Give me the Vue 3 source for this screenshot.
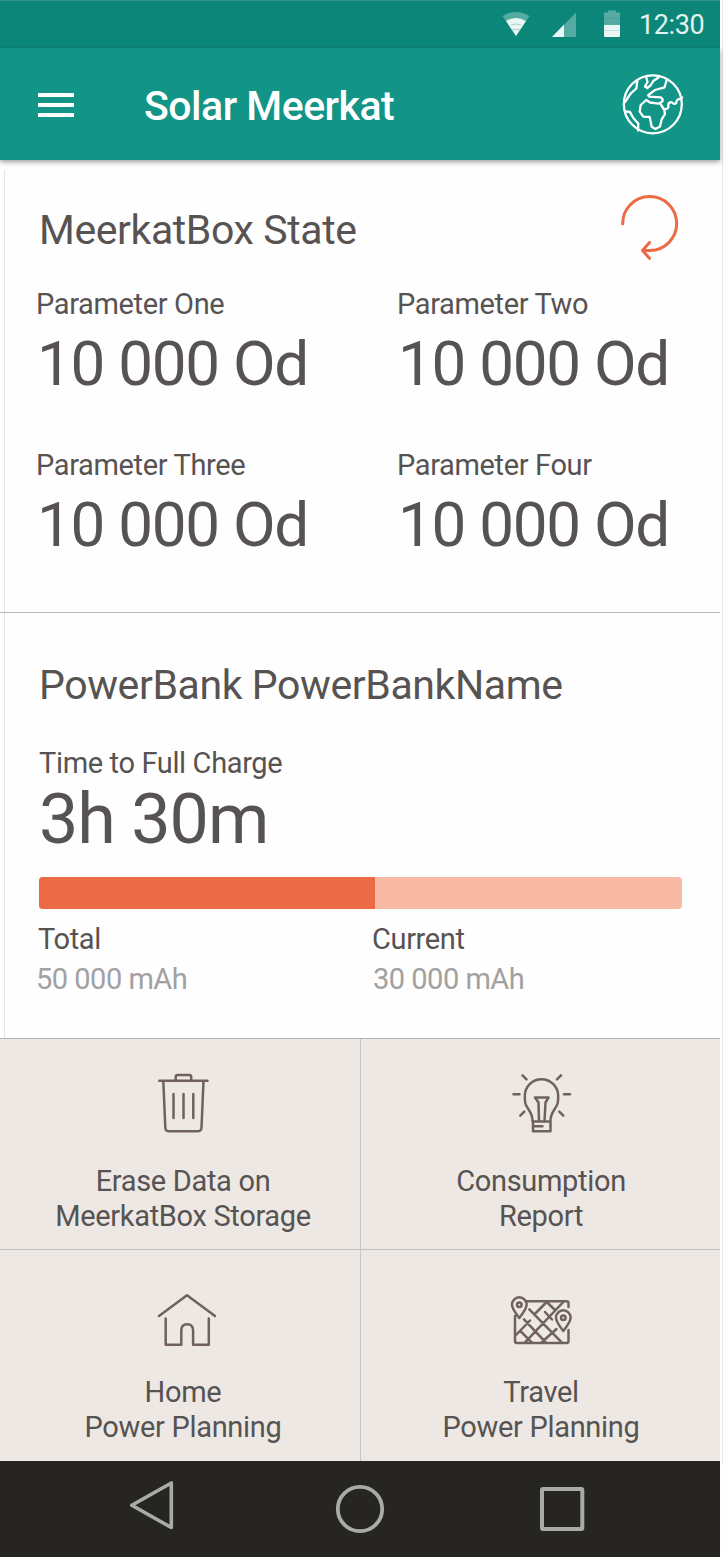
<script setup>
const params = [
  { label: 'Parameter One', value: '10 000 Od' },
  { label: 'Parameter Two', value: '10 000 Od' },
  { label: 'Parameter Three', value: '10 000 Od' },
  { label: 'Parameter Four', value: '10 000 Od' },
]
const charge = 52.3
</script>

<template>
  <div class="screen">
    <div class="status">
      <svg class="status-icons" width="124" height="36" viewBox="500 6 124 36">
        <path d="M502.500 16Q516 8 529.500 16L516 36Z" fill="#55aba1" />
        <path d="M506 21Q516 15 526 21L516 36Z" fill="#eaf6f4" />
        <path d="M511 25q5-2 10 0M512 30q4-1.500 8 0" fill="none" stroke="#9fd2cb" stroke-width="1" />
        <path d="M552 37L576 12.500V37Z" fill="#55aba1" />
        <path d="M552 37L564 24.500V37Z" fill="#eaf6f4" />
        <path d="M608 10.500h8v2h4V25h-16V12.500h4z" fill="#55aba1" />
        <path d="M604 25h16v11q0 1-1 1h-14q-1 0-1-1z" fill="#eaf6f4" />
        <path d="M604 18.500h16" stroke="#48a097" />
        <path d="M604 30.500h16" stroke="#c3e2de" />
      </svg>
      <span class="clock">12:30</span>
    </div>

    <header class="appbar">
      <div class="menu"><i></i><i></i><i></i></div>
      <h1>Solar Meerkat</h1>
      <svg class="globe" width="64" height="64" viewBox="621 72 64 64" fill="none" stroke="#fff" stroke-width="2.300" stroke-linejoin="round" stroke-linecap="round">
        <circle cx="652.800" cy="104.300" r="29" />
        <path d="M637.300 81L636.300 88.500 630.700 93.500 625 102" />
        <path d="M646.300 77.500L647.500 82 645 86.500 647.300 88 650.500 85.500 653.300 81 658.500 77.500" />
        <path d="M666.700 80L664.500 87.300 655 90 648.200 95.200 649.300 96.700 660.500 97.300Q663.500 99 662.500 101.300L659 103.700 650 102.500 646.300 100 640.700 105 639.700 111.700 643.300 116.700 649.700 117 651.700 126.700 655.500 129 660 126.500 661.700 119.300 665 114 664.300 110 661.300 105" />
        <path d="M661.500 106q3 5 6.200 2.200 1.300-1.800.6-3.200.2-3.200 3.500-2.700 2.700 2.700 4.200 1 .5-3.600 2.700-4.300 2 1 3.500-1.500" />
        <path d="M625.500 111.500l4.500.5 3.300 6 5 5.500-.3 7" />
      </svg>
    </header>

    <section class="card box-state">
      <div class="card-head">
        <h2>MeerkatBox State</h2>
        <svg width="64" height="72" viewBox="617 191 64 72" fill="none" stroke="#ec6a46" stroke-width="3" stroke-linecap="round" stroke-linejoin="round">
          <path d="M622.700 224A27 27 0 1 1 650 250.500H643M649.500 242.500L642.500 250.500 649.500 258.300" />
        </svg>
      </div>
      <div class="params">
        <div v-for="p in params" :key="p.label">
          <div class="label">{{ p.label }}</div>
          <div class="value">{{ p.value }}</div>
        </div>
      </div>
    </section>

    <section class="card bank">
      <h2>PowerBank PowerBankName</h2>
      <div class="label time">Time to Full Charge</div>
      <div class="duration">3h 30m</div>
      <div class="bar"><div class="fill" :style="{ width: charge + '%' }"></div></div>
      <div class="stats">
        <div>
          <div class="label total">Total</div>
          <div class="amount">50 000 mAh</div>
        </div>
        <div>
          <div class="label">Current</div>
          <div class="amount shifted">30 000 mAh</div>
        </div>
      </div>
    </section>

    <nav class="tiles">
      <div class="tile left">
        <svg viewBox="151 1071 64 64">
          <path d="M159.300 1080.700H207.500M175.700 1080v-3q0-2 2-2h11.500q2 0 2 2v3M163.300 1081l2 46.500q.2 3.800 4 3.800h28.200q3.800 0 4-3.800l2-46.500M173.500 1094v24M183.500 1094v24M193.300 1094v24" />
        </svg>
        <span>Erase Data on<br />MeerkatBox Storage</span>
      </div>
      <div class="tile">
        <svg viewBox="509 1071 64 64">
          <path d="M532.500 1121.500Q533 1116 528 1108.500C525 1104.500 524.800 1102 524.800 1096A16.700 16.700 0 0 1 558.200 1096C558.200 1102 558 1104.500 555 1108.500Q550 1116 550.500 1121.500ZM533 1121.500V1131.300H550.500V1121.500M534 1126.300h8.500M535 1097.500H548.500L545.500 1102.500 544.500 1121M535 1097.500L538.500 1102.500 539 1121M513.500 1094.300h6M564 1094.300h6M522.500 1075.300l4 4M561 1075.300l-4 4M524.300 1111.700l-4 4M559.300 1111.700l4 4" />
        </svg>
        <span>Consumption<br />Report</span>
      </div>
      <div class="tile left">
        <svg viewBox="151 1282 64 64" overflow="visible">
          <path d="M159 1316l28-20.700L215 1316M165.700 1318.500v26.300h15.600v-14.300q0-6.300 5.900-6.300t5.900 6.300v14.300h15.700v-26.300" />
        </svg>
        <span>Home<br />Power Planning</span>
      </div>
      <div class="tile">
        <svg viewBox="509 1282 64 64">
          <path d="M526 1301.200H566.500Q568.500 1301.200 568.500 1303v4M515 1316v25q0 2 2 2H566.500q2 0 2-2v-11M519.300 1297.300a7.300 7.300 0 0 1 7.300 7.500q0 4-7.300 13.200-7.300-9.200-7.300-13.200a7.300 7.300 0 0 1 7.300-7.500zM563.300 1310.300a7.300 7.300 0 0 1 7.300 7.500q0 4-7.300 13.200-7.300-9.200-7.300-13.200a7.300 7.300 0 0 1 7.300-7.500z" />
          <circle cx="519.300" cy="1304.800" r="2.300" />
          <circle cx="563.300" cy="1317.800" r="2.300" />
          <path d="M529.300 1309.300L561.700 1342.300M524 1319.300L545.700 1342.300M520 1330.700L531.700 1342.300M563.300 1302L525 1342.300M546.700 1302L534.300 1314.500M546.700 1302L555 1310M545 1312L552 1319.500M516 1335L530 1320.500M556.500 1329L541.700 1342.300" />
        </svg>
        <span>Travel<br />Power Planning</span>
      </div>
    </nav>

    <footer class="navbar">
      <svg width="720" height="96" viewBox="0 1461 720 96" fill="none" stroke="#aaaaa8" stroke-linejoin="round">
        <path d="M131.800 1505.300L171.300 1483V1527.500Z" stroke-width="3.600" />
        <circle cx="360" cy="1509" r="22.200" stroke-width="3.800" />
        <rect x="542" y="1489" width="40.300" height="40" rx="1" stroke-width="4" />
      </svg>
    </footer>
  </div>
</template>

<style>
body { background: #fefefe; }
</style>

<style scoped>
.screen {
  width: 724px;
  height: 1557px;
  overflow: hidden;
  box-sizing: border-box;
  padding-right: 4px;
  background: linear-gradient(#e6e8e8, #e6e8e8) 722px 0 / 1px 1464px no-repeat #fefefe;
  font-family: Roboto, "Liberation Sans", sans-serif;
  color: #575352;
}
h1, h2 { margin: 0; font-weight: 400; white-space: nowrap; }
.status {
  height: 48px;
  box-sizing: border-box;
  border-top: 1px solid #2e9388;
  background: #0c8679;
  display: flex;
  align-items: flex-start;
}
.status-icons { margin: 5px 0 0 500px; flex: none; }
.clock {
  margin: 8px 0 0 15px;
  color: #e2f2f0;
  font-size: 27px;
  line-height: 32px;
  letter-spacing: -.4px;
  white-space: nowrap;
}
.appbar {
  height: 112px;
  box-sizing: border-box;
  background: #129586;
  display: flex;
  align-items: center;
  position: relative;
  box-shadow: 0 2px 5px rgba(0, 0, 0, .38);
}
.menu { width: 36px; margin: 1px 0 0 38px; display: grid; gap: 6px; }
.menu i { height: 4px; background: #fff; }
h1 {
  margin: 3px 0 0 70px;
  flex: 1;
  color: #fff;
  font-size: 41px;
  font-weight: 500;
  letter-spacing: -.5px;
}
.globe { margin-right: 35px; }
.card { box-sizing: border-box; padding-left: 39px; background: linear-gradient(#e2e6e8, #e2e6e8) 4px 0 / 1px 100% no-repeat; }
.card h2 { font-size: 41px; line-height: 48px; letter-spacing: -.4px; }
.box-state {
  height: 453px;
  padding-top: 31px;
  border-bottom: 1px solid #b9b9b9;
  background-position: 4px 10px;
}
.card-head { height: 95px; display: flex; justify-content: space-between; padding-right: 39px; }
.card-head h2 { margin-top: 15px; }
.params { display: grid; grid-template-columns: 361px 1fr; row-gap: 49px; margin-left: -3px; }
.label { font-size: 29px; line-height: 36px; letter-spacing: -.36px; white-space: nowrap; }
.value { margin: 8px 0 0 1px; font-size: 62px; line-height: 68px; letter-spacing: -1.3px; white-space: nowrap; }
.bank { height: 426px; padding-top: 48px; border-bottom: 1px solid #b3b3b3; }
.time { margin-top: 36px; }
.duration { font-size: 70px; line-height: 76px; letter-spacing: -1px; }
.bar {
  width: 643px;
  height: 32px;
  margin-top: 20px;
  border-radius: 4px;
  overflow: hidden;
  background: #f9baa5;
}
.fill { height: 100%; background: #ec6a46; }
.stats { display: grid; grid-template-columns: 336px 1fr; margin: 12px 0 0 -3px; }
.total { padding-left: 2px; }
.amount { margin-top: 4px; font-size: 29px; line-height: 36px; letter-spacing: -.5px; color: #a1a1a1; }
.shifted { padding-left: 1px; }
.tiles {
  height: 422px;
  display: grid;
  grid-template-columns: 361px 359px;
  grid-template-rows: 211px 211px;
}
.tile {
  box-sizing: border-box;
  padding: 32px 0 0 1px;
  background: #ede8e4;
  border-bottom: 1px solid #c2bebb;
  display: flex;
  flex-direction: column;
  align-items: center;
  text-align: center;
  font-size: 29px;
  line-height: 34.5px;
  letter-spacing: -.32px;
}
.tile:nth-child(n + 3) { border-bottom: 0; }
.tile.left { padding-left: 6px; border-right: 1px solid #c9c5c2; }
.tile svg {
  width: 64px;
  height: 64px;
  margin-bottom: 29px;
  fill: none;
  stroke: #70615f;
  stroke-width: 2.5px;
  stroke-linecap: round;
  stroke-linejoin: round;
}
.navbar { height: 96px; background: #262522; }
.navbar svg { display: block; }
</style>
